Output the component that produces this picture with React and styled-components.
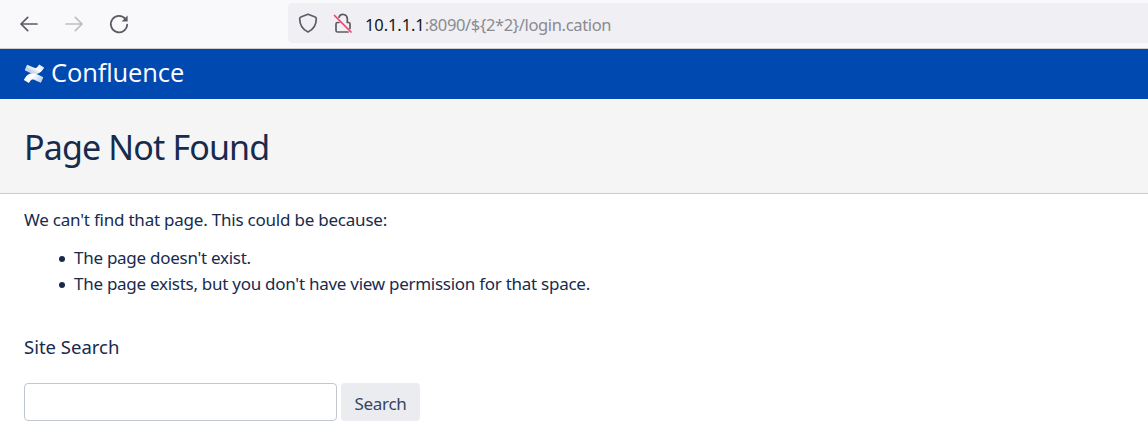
import React from "react";
import styled, { createGlobalStyle } from "styled-components";

const Global = createGlobalStyle`
  * { box-sizing: border-box; }
  body { margin: 0; background: #fff; color: #172b4d; font-family: "Noto Sans", "Open Sans", sans-serif; }
`;
const Page = styled.div`
  height: 448px;
  overflow: hidden;
`;
const Toolbar = styled.div`
  height: 49px;
  display: flex;
  align-items: flex-start;
  background: #f9f9fb;
  border-bottom: 1px solid #cccccc;
`;
const NavButtons = styled.div`
  width: 288px;
  height: 47px;
  padding-left: 19px;
  display: flex;
  align-items: center;
  gap: 25px;
`;
const Icon = styled.svg`
  display: block;
  flex: none;
  overflow: visible;
  fill: none;
  stroke: ${(p) => p.$color || "#5b5b66"};
  stroke-width: 1.7;
  stroke-linecap: round;
  stroke-linejoin: round;
`;
const AddressBar = styled.div`
  flex: 1;
  height: 40px;
  margin-top: 3px;
  padding-left: 10px;
  display: flex;
  align-items: center;
  gap: 15px;
  background: #f0f0f4;
  border-radius: 5px 0 0 5px;
`;
const Url = styled.span`
  margin-left: -3px;
  padding-top: 4px;
  font-size: 16.5px;
  line-height: 24px;
  letter-spacing: -0.35px;
  color: #8a8a90;
  white-space: nowrap;
`;
const Host = styled.span`
  color: #15141a;
  letter-spacing: -0.1px;
`;
const Brand = styled.header`
  height: 50px;
  padding: 0 24px;
  display: flex;
  align-items: center;
  gap: 7px;
  background: #0049b0;
  color: #fff;
`;
const BrandName = styled.span`
  font-family: "Open Sans", sans-serif;
  font-size: 25.5px;
  line-height: 46px;
  padding-bottom: 4px;
  letter-spacing: -0.1px;
`;
const TitleBand = styled.div`
  height: 95px;
  padding: 24px 24px 0;
  background: #f5f5f5;
  border-bottom: 1px solid #cccccc;
`;
const Title = styled.h1`
  margin: 0;
  font-size: 34px;
  font-weight: 400;
  line-height: 48px;
  letter-spacing: -0.85px;
`;
const Content = styled.main`
  padding: 13px 24px 0;
  font-size: 17px;
  line-height: 26px;
`;
const Message = styled.p`
  margin: 0;
  letter-spacing: -0.22px;
`;
const Reasons = styled.ul`
  margin: 12px 0 0;
  padding: 0 0 0 35px;
  list-style: none;
`;
const Reason = styled.li`
  display: flex;
  align-items: center;
  letter-spacing: -0.27px;
  &::before {
    content: "";
    width: 6px;
    height: 6px;
    margin: 2px 9px 0 0;
    border-radius: 50%;
    background: currentColor;
  }
`;
const SearchTitle = styled.h2`
  margin: 37px 0 0;
  font-size: 18.5px;
  font-weight: 400;
  line-height: 26px;
`;
const SearchForm = styled.form`
  margin-top: 23px;
  display: flex;
  gap: 4px;
`;
const SearchInput = styled.input`
  width: 313px;
  height: 38px;
  border: 1px solid #c1c7d0;
  border-radius: 4px;
  background: #fff;
  outline: none;
`;
const SearchButton = styled.button`
  width: 79px;
  height: 38px;
  padding: 4px 0 0;
  border: 0;
  border-radius: 4px;
  background: #ebecf0;
  color: #344563;
  font: 400 17px/26px "Noto Sans", sans-serif;
  letter-spacing: -0.3px;
`;

export default function App() {
  return (
    <Page>
      <Global />
      <Toolbar>
        <NavButtons>
          <Icon width="20" height="20" viewBox="0 0 20 20">
            <path d="M18 10H2M8.7 3.3 2 10l6.7 6.7" />
          </Icon>
          <Icon width="20" height="20" viewBox="0 0 20 20" $color="#bebec3">
            <path d="M2 10h16M11.3 3.3 18 10l-6.7 6.7" />
          </Icon>
          <Icon width="20" height="20" viewBox="0 0 20 20">
            <path d="M16.6 5.3A8.2 8.2 0 1 0 18.2 10.5" />
            <path d="M18.6 1.6v6h-6z" fill="#5b5b66" stroke="none" />
          </Icon>
        </NavButtons>
        <AddressBar>
          <Icon width="20" height="20" viewBox="0 0 20 20">
            <path d="M10 1.2 17.2 4q1.1.4 1.1 1.6C18.3 12 15.3 16.7 10 19 4.7 16.7 1.7 12 1.7 5.6Q1.7 4.4 2.8 4z" />
          </Icon>
          <Icon width="20" height="20" viewBox="0 0 20 20">
            <path d="M6 4.2a4.3 4.3 0 0 1 8.3 1.3v4h1.2q1.5 0 1.5 1.5v4.5M6 9.500H4.500Q3 9.500 3 11v6.500Q3 19 4.500 19H15" />
            <path d="M1.500 2.500 18 19" stroke="#f0406c" />
          </Icon>
          <Url>
            <Host>10.1.1.1</Host>:8090/$&#123;2*2&#125;/login.cation
          </Url>
        </AddressBar>
      </Toolbar>
      <Brand>
        <svg width="20" height="20" viewBox="0 0 24 24">
          <defs>
            <linearGradient id="upper" x1="1" y1="0.2" x2="0.3" y2="0.7">
              <stop offset="0" stopColor="#fff" stopOpacity="0.85" />
              <stop offset="0.5" stopColor="#fff" />
              <stop offset="1" stopColor="#fff" stopOpacity="0.75" />
            </linearGradient>
            <linearGradient id="lower" x1="1" y1="0.8" x2="0" y2="0.4">
              <stop offset="0" stopColor="#fff" stopOpacity="0.7" />
              <stop offset="0.65" stopColor="#fff" />
            </linearGradient>
          </defs>
          <path
            d="M.87 18.257c-.248.382-.53.875-.763 1.245a.764.764 0 0 0 .255 1.04l4.965 3.054a.764.764 0 0 0 1.058-.26c.199-.332.454-.763.733-1.221 1.967-3.247 3.945-2.853 7.508-1.146l4.957 2.337a.764.764 0 0 0 1.028-.382l2.364-5.346a.764.764 0 0 0-.382-1 599.851 599.851 0 0 1-4.965-2.361C10.911 10.97 5.224 11.185.87 18.257z"
            fill="url(#lower)"
            transform="translate(0 -1)"
          />
          <path
            d="M23.131 5.743c.249-.405.531-.875.764-1.25a.764.764 0 0 0-.256-1.034L18.675.404a.764.764 0 0 0-1.058.26c-.195.335-.451.763-.734 1.225-1.966 3.246-3.945 2.85-7.508 1.146L4.437.694a.764.764 0 0 0-1.027.382L1.046 6.422a.764.764 0 0 0 .382 1c1.039.49 3.105 1.467 4.965 2.361 6.698 3.246 12.392 3.029 16.738-4.04z"
            fill="url(#upper)"
            transform="translate(0 .4)"
          />
        </svg>
        <BrandName>Confluence</BrandName>
      </Brand>
      <TitleBand>
        <Title>Page Not Found</Title>
      </TitleBand>
      <Content>
        <Message>We can't find that page. This could be because:</Message>
        <Reasons>
          <Reason>The page doesn't exist.</Reason>
          <Reason>The page exists, but you don't have view permission for that space.</Reason>
        </Reasons>
        <SearchTitle>Site Search</SearchTitle>
        <SearchForm onSubmit={(e) => e.preventDefault()}>
          <SearchInput aria-label="Site Search" />
          <SearchButton type="submit">Search</SearchButton>
        </SearchForm>
      </Content>
    </Page>
  );
}
